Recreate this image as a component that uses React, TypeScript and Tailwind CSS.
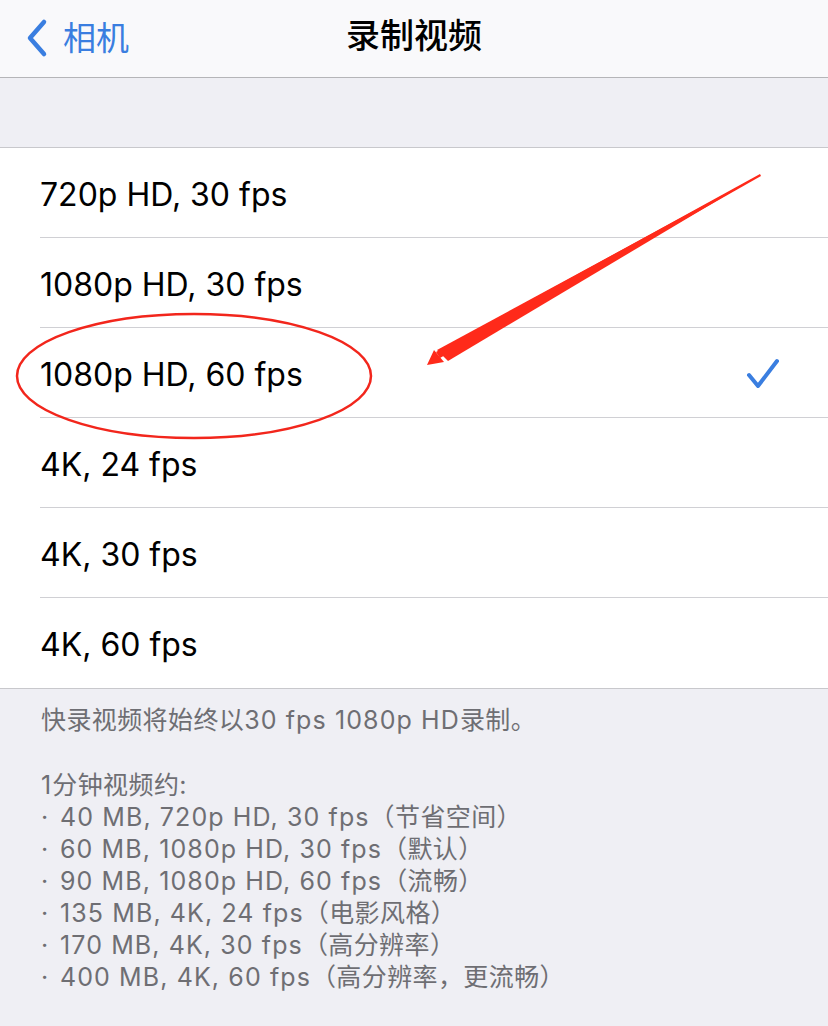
import React from 'react';

const options = [
  '720p HD, 30 fps',
  '1080p HD, 30 fps',
  '1080p HD, 60 fps',
  '4K, 24 fps',
  '4K, 30 fps',
  '4K, 60 fps',
];

const sizes = [
  '40 MB, 720p HD, 30 fps（节省空间）',
  '60 MB, 1080p HD, 30 fps（默认）',
  '90 MB, 1080p HD, 60 fps（流畅）',
  '135 MB, 4K, 24 fps（电影风格）',
  '170 MB, 4K, 30 fps（高分辨率）',
  '400 MB, 4K, 60 fps（高分辨率，更流畅）',
];

const font = { fontFamily: 'Inter, "Noto Sans CJK SC", sans-serif' };

// latin runs get wider tracking than the CJK runs, like the system font does
function Mixed({ text }: { text: string }) {
  const parts = text.split(/([\u3000-\u303f\u4e00-\u9fff\uff00-\uffef]+)/).filter(Boolean);
  return (
    <>
      {parts.map((p, i) =>
        /[\u3000-\u303f\u4e00-\u9fff\uff00-\uffef]/.test(p) ? (
          <span key={i} className="tracking-[0.4px]">{p}</span>
        ) : (
          <span key={i} className="tracking-[1.1px]">{p}</span>
        )
      )}
    </>
  );
}

export default function App() {
  return (
    <div className="relative w-[828px] h-[1026px] overflow-hidden bg-[#efeff4]" style={font}>
      {/* nav bar */}
      <div className="relative h-[78px] bg-[#f9f9fb] border-b border-[#b5b5b8] flex items-center">
        <div className="flex items-center pl-[24px] text-[#3a7ee0]">
          <svg width="26" height="40" viewBox="0 0 26 40" className="mt-[-2px]">
            <path d="M20 4 L6 20 L20 36" fill="none" stroke="#3a7ee0" strokeWidth="4.5" strokeLinecap="round" strokeLinejoin="round" />
          </svg>
          <span className="ml-[13px] text-[33px] leading-none">相机</span>
        </div>
        <div className="absolute inset-x-0 top-0 h-[72px] flex items-center justify-center pointer-events-none">
          <span className="text-[34px] font-medium text-black leading-none">录制视频</span>
        </div>
      </div>

      {/* spacer band */}
      <div className="h-[70px] border-b border-[#c8c8cc]" />

      {/* options list */}
      <div className="bg-white border-b border-[#c8c8cc]">
        {options.map((o, i) => (
          <div key={o} className="pl-[40px]">
            <div
              className={`h-[90px] flex items-center justify-between pr-[48px] ${
                i < options.length - 1 ? 'border-b border-[#d0d0d4]' : ''
              }`}
            >
              <span className="text-[32px] text-black pt-[4px]">{o}</span>
              {i === 2 && (
                <svg width="34" height="34" viewBox="0 0 34 34">
                  <path d="M3 19 L12 30 L31 5" fill="none" stroke="#3a7ee0" strokeWidth="4" strokeLinecap="round" strokeLinejoin="round" />
                </svg>
              )}
            </div>
          </div>
        ))}
      </div>

      {/* footer */}
      <div className="pl-[41px] pt-[15px] text-[25px] leading-[32px] text-[#6e6e73]">
        <div><Mixed text="快录视频将始终以30 fps 1080p HD录制。" /></div>
        <div className="h-[33px]" />
        <div><Mixed text="1分钟视频约:" /></div>
        {sizes.map((s) => (
          <div key={s} className="flex">
            <span className="w-[19px]">·</span>
            <span><Mixed text={s} /></span>
          </div>
        ))}
      </div>

      {/* annotation overlay */}
      <svg className="absolute inset-0 pointer-events-none" width="828" height="1026" viewBox="0 0 828 1026">
        <ellipse cx="194" cy="376" rx="177" ry="62" fill="none" stroke="#f2261c" strokeWidth="2.5" />
        <polygon points="760,174 761,176 440,358 436,352" fill="#ff2a1a" />
        <polygon points="760,175 448,361 437,350" fill="#ff2a1a" />
        <polygon points="427,365 434,350 444,362" fill="#ff2a1a" />
      </svg>
    </div>
  );
}
